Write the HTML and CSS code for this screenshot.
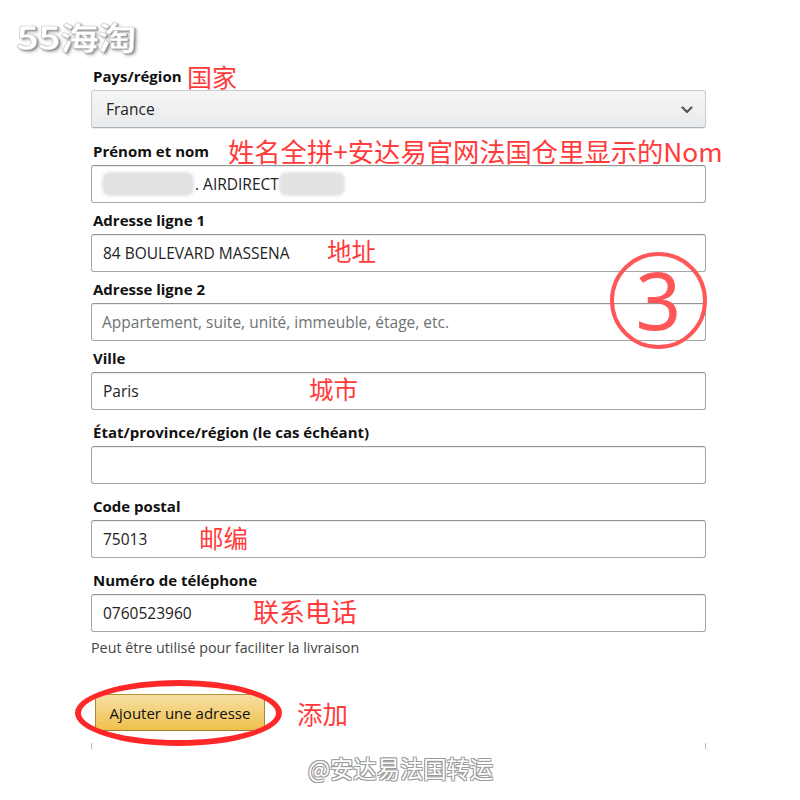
FILE: index.html
```html
<!DOCTYPE html>
<html lang="fr">
<head>
<meta charset="utf-8">
<title>Ajouter une adresse</title>
<link rel="stylesheet" href="styles.css">
</head>
<body>
<div class="page">
    <div class="logo-mark">55海淘</div>

    <form class="address-form">
        <div class="field field-country">
            <label>Pays/région</label>
            <div class="select-box">
                <span>France</span>
                <svg class="chevron" width="12" height="8" viewBox="0 0 12 8"><path d="M1.5 1.5 L6 6 L10.5 1.5" fill="none" stroke="#555" stroke-width="2.2" stroke-linecap="round" stroke-linejoin="round"/></svg>
            </div>
            <span class="note note-country">国家</span>
        </div>

        <div class="field field-tight">
            <label>Prénom et nom</label>
            <div class="text-box">
                <span class="smudge smudge-a"></span>
                <span class="value">. AIRDIRECT</span>
                <span class="smudge smudge-b"></span>
            </div>
            <span class="note note-name">姓名全拼+安达易官网法国仓里显示的Nom</span>
        </div>

        <div class="field field-tight">
            <label>Adresse ligne 1</label>
            <div class="text-box"><span class="value">84 BOULEVARD MASSENA</span></div>
            <span class="note note-address">地址</span>
        </div>

        <div class="field field-tight">
            <label>Adresse ligne 2</label>
            <div class="text-box"><span class="placeholder">Appartement, suite, unité, immeuble, étage, etc.</span></div>
        </div>

        <div class="field">
            <label>Ville</label>
            <div class="text-box"><span class="value">Paris</span></div>
            <span class="note note-city">城市</span>
        </div>

        <div class="field">
            <label>État/province/région (le cas échéant)</label>
            <div class="text-box"></div>
        </div>

        <div class="field">
            <label>Code postal</label>
            <div class="text-box"><span class="value">75013</span></div>
            <span class="note note-zip">邮编</span>
        </div>

        <div class="field field-last">
            <label>Numéro de téléphone</label>
            <div class="text-box"><span class="value">0760523960</span></div>
            <span class="note note-phone">联系电话</span>
        </div>
        <p class="hint">Peut être utilisé pour faciliter la livraison</p>

        <div class="submit-row">
            <button type="button" class="add-button">Ajouter une adresse</button>
            <span class="ring"></span>
            <span class="note-add">添加</span>
        </div>
        <div class="card-edge"></div>
    </form>

    <div class="step-badge">3</div>
    <div class="credit">@安达易法国转运</div>
</div>
</body>
</html>
```

FILE: styles.css
```css
:root {
    --ink: #111;
    --field-border: #a6a6a6;
    --note-red: #ff3b3b;
}

body {
    margin: 0;
    background: #fff;
    font-family: "Open Sans", "Noto Sans", sans-serif;
    color: var(--ink);
}

.page {
    position: relative;
    width: 800px;
    height: 800px;
    overflow: hidden;
}

.logo-mark {
    position: absolute;
    left: 16px;
    top: 13px;
    font-family: "Noto Sans CJK SC", sans-serif;
    font-size: 32px;
    font-weight: 700;
    letter-spacing: -1px;
    color: #fff;
    transform: scaleX(1.22);
    transform-origin: left center;
    -webkit-text-stroke: 0.6px #c8c8c8;
    text-shadow: 1px 1px 1px #888, 2px 2px 3px rgba(0, 0, 0, 0.35);
}

.address-form {
    width: 615px;
    padding: 66px 0 0 91px;
}

.field {
    position: relative;
    margin-bottom: 12px;
}

.field-country {
    margin-bottom: 13px;
}

.field-tight {
    margin-bottom: 7px;
}

.field-last {
    margin-bottom: 0;
}

.field label {
    display: block;
    height: 20px;
    line-height: 20px;
    padding-left: 2px;
    margin-bottom: 4px;
    font-size: 15px;
    font-weight: 700;
    color: #111;
}

.select-box,
.text-box {
    box-sizing: border-box;
    height: 38px;
    display: flex;
    align-items: center;
    padding: 0 10px;
    font-size: 15.5px;
    color: #222;
}

.select-box {
    justify-content: space-between;
    padding: 0 12px 0 14px;
    border: 1px solid #c8cbcf;
    border-bottom-color: #aeb2b6;
    border-radius: 3px;
    background: linear-gradient(#f5f6f6, #e8eaec);
    box-shadow: 0 1px 0 rgba(0, 0, 0, 0.08);
}

.chevron {
    margin-top: 1px;
}

.text-box {
    border: 1px solid var(--field-border);
    border-top-color: #949494;
    border-radius: 3px;
    background: #fff;
    box-shadow: inset 0 1px 0 rgba(0, 0, 0, 0.07);
}

.value {
    padding-left: 1px;
}

.placeholder {
    color: #6f7373;
}

.smudge {
    display: inline-block;
    height: 24px;
    border-radius: 8px;
    background: #e2e2e2;
    filter: blur(1.5px);
}

.smudge-a {
    width: 92px;
}

.smudge-b {
    width: 66px;
}

.note {
    position: absolute;
    font-family: "Noto Sans CJK SC", sans-serif;
    font-weight: 400;
    color: var(--note-red);
    line-height: 1;
    white-space: nowrap;
}

.note-country {
    left: 96px;
    top: -2px;
    font-size: 25px;
}

.note-name {
    left: 137px;
    top: -3px;
    font-size: 26.3px;
}

.note-address {
    left: 236px;
    top: 29px;
    font-size: 24.5px;
}

.note-city {
    left: 218px;
    top: 29px;
    font-size: 24.5px;
}

.note-zip {
    left: 108px;
    top: 30px;
    font-size: 24.5px;
}

.note-phone {
    left: 162px;
    top: 28px;
    font-size: 26px;
}

.hint {
    margin: 7px 0 0;
    font-size: 14.3px;
    line-height: 18px;
    color: #444;
}

.submit-row {
    position: relative;
    display: flex;
    align-items: center;
    margin: 37px 0 0 4px;
}

.add-button {
    width: 170px;
    height: 37px;
    padding: 0;
    border: 1px solid #a88734;
    border-color: #b49236 #a88734 #9c7e31;
    border-radius: 3px;
    background: linear-gradient(#f7dfa5, #efc04c);
    font-family: "Open Sans", "Noto Sans", sans-serif;
    font-size: 15px;
    color: #111;
}

.ring {
    position: absolute;
    left: -20px;
    top: -14px;
    width: 207px;
    height: 66px;
    box-sizing: border-box;
    border: 6px solid #ff2828;
    border-radius: 50%;
}

.note-add {
    margin-left: 32px;
    font-family: "Noto Sans CJK SC", sans-serif;
    font-size: 25.5px;
    color: var(--note-red);
}

.card-edge {
    height: 6px;
    margin-top: 12px;
    border-left: 1px solid #bbb;
    border-right: 1px solid #bbb;
}

.step-badge {
    position: absolute;
    left: 610px;
    top: 252px;
    width: 97px;
    height: 97px;
    box-sizing: border-box;
    border: 4px solid #ff5757;
    border-radius: 50%;
    display: flex;
    align-items: center;
    justify-content: center;
    font-family: "Noto Sans", sans-serif;
    font-size: 80px;
    line-height: 1;
    color: #ff5757;
    padding-bottom: 4px;
}

.credit {
    position: absolute;
    left: 308px;
    top: 751px;
    font-family: "Noto Sans CJK SC", sans-serif;
    font-size: 23.3px;
    color: #fff;
    text-shadow: -1px -1px 0 #9a9a9a, 1px -1px 0 #9a9a9a, -1px 1px 0 #9a9a9a, 1px 1px 0 #9a9a9a;
}
```
